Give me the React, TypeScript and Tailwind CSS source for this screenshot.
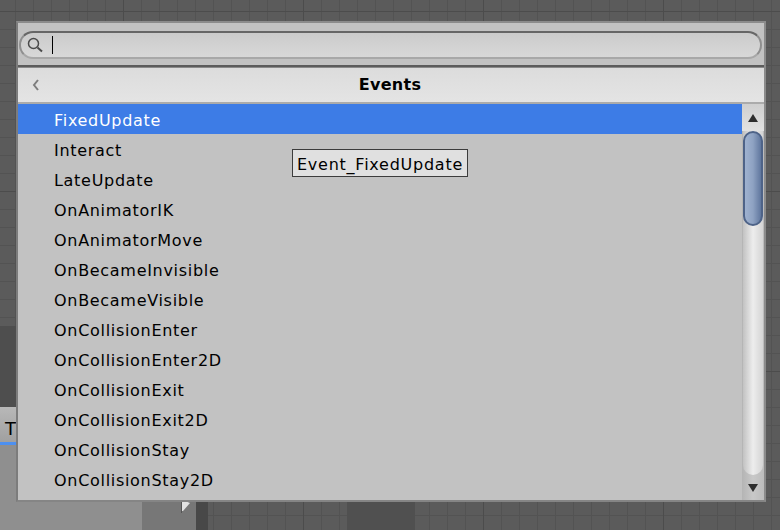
const EVENTS = [
  'FixedUpdate',
  'Interact',
  'LateUpdate',
  'OnAnimatorIK',
  'OnAnimatorMove',
  'OnBecameInvisible',
  'OnBecameVisible',
  'OnCollisionEnter',
  'OnCollisionEnter2D',
  'OnCollisionExit',
  'OnCollisionExit2D',
  'OnCollisionStay',
  'OnCollisionStay2D',
]

const GRID =
  'bg-[linear-gradient(#4c4c4c_1px,transparent_1px),linear-gradient(90deg,#4c4c4c_1px,transparent_1px),linear-gradient(#535353_1px,transparent_1px),linear-gradient(90deg,#535353_1px,transparent_1px)] bg-[size:180px_180px,180px_180px,18px_18px,18px_18px] bg-[position:0_11px,123px_0,0_11px,15px_0]'

function Backdrop() {
  return (
    <>
      {/* graph nodes behind the popup */}
      <div className="absolute left-0 top-[326px] w-[16px] h-[82px] bg-[#4e4e4e]" />
      <div className="absolute left-0 top-[407px] w-[16px] h-[123px] bg-[#8f8f8f]">
        <div className="h-[35px] bg-gradient-to-b from-[#b8b8b8] to-[#a0a0a0] pl-[5px] pt-[11px] text-[18px] leading-[22px] text-black">T</div>
        <div className="h-[3px] bg-[#4d90f0]" />
      </div>
      <div className="absolute left-[16px] top-[501px] w-[126px] h-[29px] bg-[#8f8f8f]" />
      <div className="absolute left-[142px] top-[501px] w-[54px] h-[29px] bg-[#777777]" />
      <div className="absolute left-[196px] top-[501px] w-[12px] h-[29px] bg-[#484848]" />
      <div className="absolute left-[347px] top-[501px] w-[68px] h-[29px] bg-[#505050]" />
      <svg className="absolute left-[180px] top-[500px]" width="12" height="14" viewBox="0 0 12 14">
        <path d="M2 1h3l5 2-7 8H2z" fill="#e2e2e2" />
        <path d="M1.5 1v12" stroke="#555" strokeWidth="1" />
      </svg>
    </>
  )
}

function ScrollBar() {
  return (
    <div className="w-[22px] shrink-0 flex flex-col bg-gradient-to-r from-[#b4b4b4] via-[#c8c8c8] to-[#bcbcbc]">
      <div className="h-[27px] flex items-center justify-center shrink-0 bg-gradient-to-b from-[#cfcfcf] to-[#e2e2e2]">
        <svg width="10" height="8" viewBox="0 0 10 8">
          <path d="M5 0l5 8H0z" fill="#2e2e2e" />
        </svg>
      </div>
      <div className="flex-1 min-h-0 flex flex-col mx-[1px] rounded-b-[10px] bg-gradient-to-r from-[#c2c2c2] via-[#ededed] to-[#d4d4d4]">
        <div className="mx-auto w-[20px] h-[95px] shrink-0 rounded-[10px] border-2 border-[#4e6388] bg-gradient-to-r from-[#9fb2d0] via-[#8ea2c2] to-[#60779e]" />
      </div>
      <div className="h-[25px] shrink-0 flex items-center justify-center">
        <svg width="10" height="8" viewBox="0 0 10 8">
          <path d="M0 0h10L5 8z" fill="#2e2e2e" />
        </svg>
      </div>
    </div>
  )
}

export default function App() {
  return (
    <div className={`relative w-[780px] h-[530px] overflow-hidden bg-[#5b5b5b] font-['DejaVu_Sans',sans-serif] ${GRID}`}>
      <Backdrop />

      <div className="absolute left-[16px] top-[21px] w-[750px] h-[481px] flex flex-col border-2 border-[#8b8b8b] border-l-[#7c7c7c] border-b-[#858585] bg-[#c2c2c2]">
        {/* search */}
        <div className="h-[42px] shrink-0 flex items-center px-[1px] pt-[2px] bg-[#c2c2c2]">
          <div className="w-[743px] h-[28px] rounded-[14px] border-2 border-[#8f8f8f] border-t-[#666666] border-b-[#a8a8a8] bg-gradient-to-b from-[#cbcbcb] to-[#d8d8d8] flex items-center pl-[6px] gap-[9px]">
            <svg width="16" height="16" viewBox="0 0 16 16" fill="none" stroke="#4a4a4a">
              <circle cx="6.5" cy="6.5" r="5" strokeWidth="1.5" />
              <path d="M10.5 10.5l4.5 4" strokeWidth="2" />
            </svg>
            <div className="w-[1px] h-[18px] bg-black" />
          </div>
        </div>
        <div className="h-[3px] shrink-0 bg-[#5c5c5c] border-b border-[#8a8a8a]" />

        {/* header */}
        <div className="relative h-[36px] shrink-0 flex items-center justify-center bg-gradient-to-b from-[#dcdcdc] to-[#e4e4e4] border-b-2 border-[#ababab]">
          <svg className="absolute left-[14px] top-[11px]" width="7" height="12" viewBox="0 0 7 12" fill="none" stroke="#7d7d7d" strokeWidth="2">
            <path d="M6 1L2 6l4 5" />
          </svg>
          <span className="text-[16px] font-bold tracking-[0.3px] text-black mr-[2px]">Events</span>
        </div>

        {/* list */}
        <div className="relative flex-1 flex min-h-0">
          <div className="flex-1 flex flex-col min-w-0">
            {EVENTS.map((name, i) => (
              <div
                key={name}
                className={`h-[30px] shrink-0 flex items-center pl-[36px] pt-[3px] text-[16px] tracking-[0.7px] ${i === 0 ? 'bg-[#3d7ce6] text-white' : 'text-black'}`}
              >
                {name}
              </div>
            ))}
          </div>
          <ScrollBar />

          {/* tooltip */}
          <div className="absolute left-[274px] top-[45px] h-[28px] w-[176px] flex items-center pl-[4px] pt-[3px] border border-[#3c3c3c] bg-[#e0e0e0] text-[16px] tracking-[0.75px] text-black">
            Event_FixedUpdate
          </div>
        </div>
      </div>
    </div>
  )
}
